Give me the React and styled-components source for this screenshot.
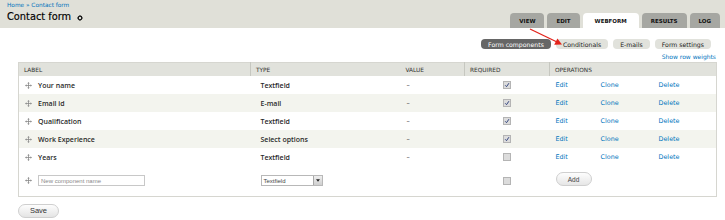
import React from "react";
import styled, { createGlobalStyle } from "styled-components";

const GlobalStyle = createGlobalStyle`
	body {
		margin: 0;
		background: #fff;
		font-family: "DejaVu Sans", Verdana, sans-serif;
		color: #333;
	}
`;

const rows = [
	{ label: "Your name", type: "Textfield", required: true },
	{ label: "Email id", type: "E-mail", required: true },
	{ label: "Qualification", type: "Textfield", required: true },
	{ label: "Work Experience", type: "Select options", required: true },
	{ label: "Years", type: "Textfield", required: false },
];

const tabs = ["View", "Edit", "Webform", "Results", "Log"];
const subTabs = ["Form components", "Conditionals", "E-mails", "Form settings"];

function DragHandle() {
	return (
		<svg width="7" height="7" viewBox="0 0 14 14">
			<g fill="#8a8a8a">
				<rect x="6.2" y="2" width="1.6" height="10" />
				<rect x="2" y="6.2" width="10" height="1.6" />
				<polygon points="7,0 9.5,3 4.5,3" />
				<polygon points="7,14 9.5,11 4.5,11" />
				<polygon points="0,7 3,4.5 3,9.5" />
				<polygon points="14,7 11,4.5 11,9.5" />
			</g>
		</svg>
	);
}

function Gear() {
	return (
		<svg width="6" height="6" viewBox="0 0 12 12">
			<circle cx="6" cy="6" r="3.6" fill="none" stroke="#111" strokeWidth="2.4" />
			<g stroke="#111" strokeWidth="1.6">
				<line x1="6" y1="0.5" x2="6" y2="2.5" />
				<line x1="6" y1="9.5" x2="6" y2="11.5" />
				<line x1="0.5" y1="6" x2="2.5" y2="6" />
				<line x1="9.5" y1="6" x2="11.5" y2="6" />
			</g>
		</svg>
	);
}

function Check({ checked }) {
	return (
		<CheckBox>
			{checked && (
				<svg width="6" height="6" viewBox="0 0 10 10">
					<path d="M2 5.5 L4.2 7.8 L8.2 2" fill="none" stroke="#2c3f7a" strokeWidth="1.6" />
				</svg>
			)}
		</CheckBox>
	);
}

function App() {
	return (
		<Page>
			<GlobalStyle />
			<Header>
				<TitleBlock>
					<Breadcrumb>
						<a>Home</a> » <a>Contact form</a>
					</Breadcrumb>
					<Title>
						Contact form <Gear />
					</Title>
				</TitleBlock>
				<Tabs>
					{tabs.map((t) => (
						<Tab key={t} $active={t === "Webform"}>
							{t}
						</Tab>
					))}
				</Tabs>
			</Header>

			<Content>
				<SubTabs>
					{subTabs.map((t) => (
						<SubTab key={t} $active={t === "Form components"}>
							{t}
						</SubTab>
					))}
				</SubTabs>
				<WeightsLink>Show row weights</WeightsLink>

				<Table>
					<colgroup>
						<col style={{ width: 232 }} />
						<col style={{ width: 150 }} />
						<col style={{ width: 64 }} />
						<col style={{ width: 85 }} />
						<col style={{ width: 167 }} />
					</colgroup>
					<thead>
						<tr>
							<Th>Label</Th>
							<Th $sep>Type</Th>
							<Th>Value</Th>
							<Th $sep>Required</Th>
							<Th $sep>Operations</Th>
						</tr>
					</thead>
					<tbody>
						{rows.map((r, i) => (
							<Row key={r.label} $even={i % 2 === 1}>
								<LabelCell>
									<DragHandle />
									<CellText>{r.label}</CellText>
								</LabelCell>
								<TypeCell>
									<CellText>{r.type}</CellText>
								</TypeCell>
								<Td>–</Td>
								<CenterCell>
									<Check checked={r.required} />
								</CenterCell>
								<Td>
									<Ops>
										<OpLink $w={45}>Edit</OpLink>
										<OpLink $w={58}>Clone</OpLink>
										<OpLink>Delete</OpLink>
									</Ops>
								</Td>
							</Row>
						))}
						<NewRow>
							<LabelCell>
								<DragHandle />
								<TextInput placeholder="New component name" />
							</LabelCell>
							<TypeCell>
								<Select>
									<span>Textfield</span>
									<SelectArrow>
										<svg width="4" height="3" viewBox="0 0 8 5">
											<polygon points="0,0 8,0 4,5" fill="#222" />
										</svg>
									</SelectArrow>
								</Select>
							</TypeCell>
							<Td />
							<CenterCell>
								<Check checked={false} />
							</CenterCell>
							<Td>
								<AddButton>Add</AddButton>
							</Td>
						</NewRow>
					</tbody>
				</Table>

				<SaveButton>Save</SaveButton>
			</Content>

			<Arrow width="40" height="22" viewBox="0 0 40 22">
				<line x1="4" y1="3" x2="31" y2="16" stroke="#e3231b" strokeWidth="1.3" />
				<polygon points="36,18.6 28.2,18.8 31.4,12.4" fill="#e3231b" />
			</Arrow>
		</Page>
	);
}

export default App;

const Page = styled.div`
	position: relative;
	width: 725px;
	height: 220px;
	overflow: hidden;
`;

const Header = styled.header`
	display: flex;
	justify-content: space-between;
	align-items: flex-end;
	height: 28px;
	padding: 0 5px 0 7px;
	background: #e0e0d8;
`;

const TitleBlock = styled.div`
	display: flex;
	flex-direction: column;
	align-self: stretch;
	padding-top: 2px;
`;

const Breadcrumb = styled.div`
	font-size: 5.8px;
	line-height: 7px;
	color: #0074bd;

	a {
		color: #0074bd;
	}
`;

const Title = styled.h1`
	display: flex;
	align-items: center;
	gap: 6px;
	margin: 2px 0 0;
	font-size: 9.8px;
	line-height: 12px;
	font-weight: normal;
	color: #000;
	-webkit-text-stroke: 0.15px #000;

	svg {
		margin-top: 2px;
	}
`;

const Tabs = styled.ul`
	display: flex;
	gap: 3px;
	margin: 0;
	padding: 0;
	list-style: none;
`;

const Tab = styled.li`
	display: flex;
	align-items: center;
	justify-content: center;
	height: 15px;
	padding: 0 9px;
	border-radius: 4px 4px 0 0;
	background: ${(p) => (p.$active ? "#fff" : "#a6a7a2")};
	font-size: 5.5px;
	font-weight: bold;
	text-transform: uppercase;
	color: #111;
	${(p) => p.$active && "padding: 0 12px;"}
`;

const Content = styled.main`
	display: flex;
	flex-direction: column;
	padding: 11px 9px 0 18px;
`;

const SubTabs = styled.div`
	display: flex;
	justify-content: flex-end;
	gap: 5px;
	margin-right: 5px;
`;

const SubTab = styled.span`
	display: flex;
	align-items: center;
	height: 10px;
	padding: 0 7px;
	border-radius: 4px;
	background: ${(p) => (p.$active ? "#666" : "#e1e2dc")};
	color: ${(p) => (p.$active ? "#fff" : "#222")};
	font-size: 6.2px;
`;

const WeightsLink = styled.a`
	align-self: flex-end;
	margin-top: 4px;
	font-size: 6px;
	line-height: 8px;
	color: #0074bd;
`;

const Table = styled.table`
	width: 698px;
	margin-top: 1px;
	border-collapse: collapse;
	table-layout: fixed;
	border: 1px solid #d6d6d0;
`;

const Th = styled.th`
	height: 13px;
	padding: 0 5px;
	background: #e1e2dc;
	border-left: ${(p) => (p.$sep ? "1px solid #c6c7c0" : "none")};
	text-align: left;
	font-size: 5.8px;
	font-weight: normal;
	text-transform: uppercase;
	color: #333;
`;

const Row = styled.tr`
	height: 18px;
	background: ${(p) => (p.$even ? "#f3f4ee" : "#fff")};
`;

const NewRow = styled.tr`
	height: 30px;
	background: #fff;
`;

const Td = styled.td`
	padding: 0 6px;
	font-size: 6.4px;
	color: #222;
`;

const CellText = styled.span`
	font-family: "Open Sans", "DejaVu Sans", sans-serif;
	font-size: 7px;
	font-weight: 600;
	color: #2a2a2a;
`;

const LabelCell = styled(Td)`
	> * {
		vertical-align: middle;
	}

	svg {
		margin-right: 6px;
	}
`;

const TypeCell = styled(Td)`
	padding-left: 10px;
`;

const CenterCell = styled(Td)`
	text-align: center;
`;

const CheckBox = styled.span`
	display: inline-flex;
	align-items: center;
	justify-content: center;
	vertical-align: middle;
	width: 6px;
	height: 6px;
	border: 1px solid #b4b4b4;
	background: #dcdcdc;
`;

const Ops = styled.div`
	display: flex;
`;

const OpLink = styled.a`
	width: ${(p) => (p.$w ? `${p.$w}px` : "auto")};
	color: #0074bd;
`;

const TextInput = styled.input`
	box-sizing: border-box;
	width: 107px;
	height: 11px;
	padding: 0 2px;
	border: 1px solid #c8c8c8;
	font-family: "Liberation Sans", Arial, sans-serif;
	font-size: 6px;
	outline: none;

	&::placeholder {
		color: #8a8a8a;
	}
`;

const Select = styled.div`
	box-sizing: border-box;
	display: flex;
	align-items: center;
	justify-content: space-between;
	width: 62px;
	height: 11px;
	padding-left: 2px;
	border: 1px solid #b8b8b8;
	background: #fff;
	font-family: "Liberation Sans", Arial, sans-serif;
	font-size: 6px;
	color: #444;
`;

const SelectArrow = styled.span`
	display: flex;
	align-items: center;
	justify-content: center;
	width: 8px;
	height: 100%;
	border-left: 1px solid #a8a8a8;
	background: linear-gradient(#eee, #cfcfcf);
`;

const AddButton = styled.button`
	width: 36px;
	height: 14px;
	margin-top: -4px;
	padding: 0;
	border: 1px solid #cfcfcf;
	border-radius: 8px;
	background: linear-gradient(#fdfdfd, #e6e6e6);
	font-family: "Liberation Sans", Arial, sans-serif;
	font-size: 6.5px;
	color: #444;
`;

const SaveButton = styled.button`
	align-self: flex-start;
	width: 41px;
	height: 14px;
	margin-top: 7px;
	padding: 0;
	border: 1px solid #cfcfcf;
	border-radius: 8px;
	background: linear-gradient(#fdfdfd, #e4e4e4);
	font-family: "Liberation Sans", Arial, sans-serif;
	font-size: 7.5px;
	color: #333;
`;

const Arrow = styled.svg`
	position: absolute;
	left: 526px;
	top: 26px;
`;
